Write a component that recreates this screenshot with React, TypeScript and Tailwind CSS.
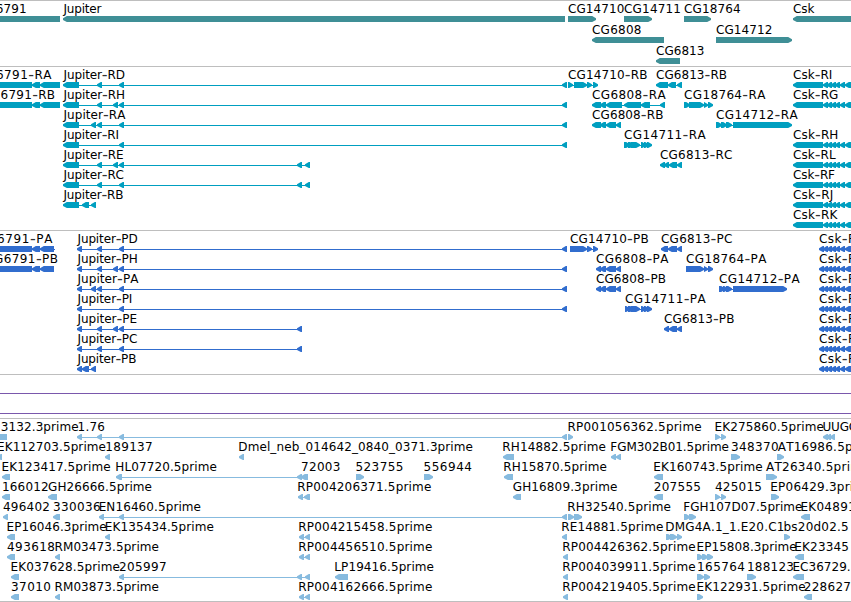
type Dir = "L" | "R" | "B";
type Part = [Dir, number, number];
type Label = [string, number, number];
type Row = { labels: Label[]; parts: Part[]; lines?: [number, number][] };

const L = (...spans: number[]): Part[] => pairs("L", spans);
const R = (...spans: number[]): Part[] => pairs("R", spans);
const B = (...spans: number[]): Part[] => pairs("B", spans);

function pairs(dir: Dir, spans: number[]): Part[] {
  const out: Part[] = [];
  for (let i = 0; i < spans.length; i += 2) out.push([dir, spans[i], spans[i + 1]]);
  return out;
}

const genes: Row[] = [
  {
    labels: [["6791", -4.2, 26], ["Jupiter", 63.5, 100.7], ["CG14710", 568, 623.7], ["CG14711", 624, 680.3], ["CG18764", 684, 740], ["Csk", 793, 813.7]],
    parts: [...B(-5, 60), ...L(63, 565, 793, 900), ...R(568, 596, 624, 652, 684, 711)],
  },
  { labels: [["CG6808", 592, 640.7], ["CG14712", 716, 771.7]], parts: [...L(592, 664), ...R(716, 792)] },
  { labels: [["CG6813", 656, 703.7]], parts: L(656, 680) },
];

const cskExons = L(823, 828, 827, 832, 831, 836, 835, 840, 840, 845, 845, 851);
const cskRna = [...L(793, 823), ...cskExons];
const leftRna = [...B(-5, 32), ...L(32, 40, 40, 60)];

const transcripts: Row[] = [
  {
    labels: [["6791-RA", -4, 50.7], ["Jupiter-RD", 63.5, 124.3], ["CG14710-RB", 568, 646.7], ["CG6813-RB", 656, 726.3], ["Csk-RI", 793, 831.7]],
    parts: [...leftRna, ...L(63, 79, 97, 102, 119, 124, 562, 567), ...R(568, 573, 574, 587, 587, 592, 593, 598), ...L(656, 668, 668, 676, 677, 682), ...cskRna],
    lines: [[63, 567], [568, 598], [656, 682], [823, 851]],
  },
  {
    labels: [["6791-RB", 0.6, 54.3], ["Jupiter-RH", 63.5, 124.3], ["CG6808-RA", 592, 665], ["CG18764-RA", 684, 764.7], ["Csk-RG", 793, 837.7]],
    parts: [...leftRna, ...L(63, 79, 97, 102, 113, 118, 119, 124, 562, 567, 592, 601, 600, 606, 606, 622, 624, 641, 641, 650, 660, 665), ...R(684, 690, 689, 704, 704, 708, 708, 713), ...cskRna],
    lines: [[63, 567], [592, 665], [823, 851]],
  },
  {
    labels: [["Jupiter-RA", 63.5, 124.7], ["CG6808-RB", 592, 662.7], ["CG14712-RA", 716, 797]],
    parts: [...L(63, 79, 91, 96, 97, 102, 119, 124, 562, 567, 592, 601, 600, 606, 606, 616, 616, 621), ...R(716, 722, 721, 727, 726, 732, 733, 792)],
    lines: [[63, 567], [592, 621], [716, 740]],
  },
  {
    labels: [["Jupiter-RI", 63.5, 118.3], ["CG14711-RA", 624, 705], ["Csk-RH", 793, 837.7]],
    parts: [...L(63, 79, 119, 124, 562, 567), ...R(624, 630, 628, 634, 631, 640, 641, 646, 644, 649, 647, 652), ...cskRna],
    lines: [[63, 567], [624, 652]],
  },
  {
    labels: [["Jupiter-RE", 63.5, 123], ["CG6813-RC", 660, 731.7], ["Csk-RL", 793, 835]],
    parts: [...L(63, 79, 97, 102, 113, 118, 119, 124, 297, 302, 305, 310, 660, 665, 664, 669, 669, 677, 677, 682), ...cskRna],
    lines: [[63, 310], [660, 682]],
  },
  {
    labels: [["Jupiter-RC", 63.5, 123.3], ["Csk-RF", 793, 834.3]],
    parts: [...L(63, 79, 97, 102, 119, 124, 297, 302, 305, 310), ...cskRna],
    lines: [[63, 310]],
  },
  {
    labels: [["Jupiter-RB", 63.5, 122.7], ["Csk-RJ", 793, 832.7]],
    parts: [...L(63, 79, 82, 89, 91, 96), ...cskRna],
    lines: [[63, 96]],
  },
  { labels: [["Csk-RK", 793, 836.7]], parts: cskRna },
];

const leftCds = [...B(-5, 32), ...L(32, 40, 40, 54)];
const cskCds = [...L(819, 824), ...cskExons];
const cskP: Label = ["Csk-P", 819, 854.5];

const proteins: Row[] = [
  {
    labels: [["6791-PA", -3, 51.7], ["Jupiter-PD", 77.5, 137], ["CG14710-PB", 570, 648], ["CG6813-PC", 661, 731.7], cskP],
    parts: [...leftCds, ...L(77, 82, 97, 102, 119, 124, 562, 567), ...R(570, 587, 587, 592, 593, 598), ...L(661, 668, 668, 677, 677, 682), ...cskCds],
    lines: [[32, 56], [77, 567], [570, 598], [661, 682]],
  },
  {
    labels: [["G6791-PB", -6, 57.3], ["Jupiter-PH", 77.5, 137], ["CG6808-PA", 596, 667.7], ["CG18764-PA", 686, 765.7], cskP],
    parts: [...leftCds, ...L(77, 82, 97, 102, 113, 118, 119, 124, 562, 567, 596, 601, 600, 606, 606, 616, 616, 621), ...R(686, 704, 704, 708, 708, 713), ...cskCds],
    lines: [[77, 567], [596, 621]],
  },
  {
    labels: [["Jupiter-PA", 77.5, 137.7], ["CG6808-PB", 596, 665.3], ["CG14712-PA", 719, 799], cskP],
    parts: [...L(77, 82, 91, 96, 97, 102, 119, 124, 562, 567, 596, 601, 600, 606, 606, 616, 616, 621), ...R(719, 725, 723, 728, 726, 732, 733, 787), ...cskCds],
    lines: [[77, 567], [596, 621], [719, 740]],
  },
  {
    labels: [["Jupiter-PI", 77.5, 131.7], ["CG14711-PA", 625, 705], cskP],
    parts: [...L(77, 82, 119, 124, 562, 567), ...R(625, 630, 628, 634, 631, 640, 641, 646, 644, 649, 647, 652), ...cskCds],
    lines: [[77, 567], [625, 652]],
  },
  {
    labels: [["Jupiter-PE", 77.5, 136.3], ["CG6813-PB", 664, 733.7], cskP],
    parts: [...L(77, 82, 97, 102, 113, 118, 119, 124, 297, 302, 664, 669, 669, 677, 677, 682), ...cskCds],
    lines: [[77, 302], [664, 682]],
  },
  {
    labels: [["Jupiter-PC", 77.5, 136.7], cskP],
    parts: [...L(77, 82, 97, 102, 119, 124, 297, 302), ...cskCds],
    lines: [[77, 302]],
  },
  {
    labels: [["Jupiter-PB", 77.5, 135.7], cskP],
    parts: [...L(77, 82, 82, 89, 91, 96), ...cskCds],
    lines: [[77, 96]],
  },
];

const ests: Row[] = [
  {
    labels: [["3132.3prime", 0.8, 78], ["1.76", 77.5, 104.3], ["RP001056362.5prime", 567.5, 701], ["EK275860.5prime", 714.5, 823.3], ["UUGC", 822.5, 856.5]],
    parts: [...B(-5, 7), ...L(77, 82, 97, 102, 119, 124, 562, 567), ...R(568, 573, 715, 720, 721, 726), ...L(823, 828, 826, 831, 830, 835)],
    lines: [[77, 567], [715, 726], [823, 835]],
  },
  {
    labels: [["EK112703.5prime", -3, 105.3], ["189137", 105.3, 152], ["Dmel_neb_014642_0840_0371.3prime", 238.3, 472.3], ["RH14882.5prime", 502.3, 605.3], ["FGM302B01.5prime", 610.3, 728.3], ["348370", 731, 778], ["AT16986.5prime", 777.7, 880.3]],
    parts: [...L(-3, 2, 105, 110, 239, 244, 503, 514, 611, 616, 616, 621), ...R(731, 740, 777, 784)],
    lines: [[611, 621]],
  },
  {
    labels: [["EK123417.5prime", 1.5, 110], ["HL07720.5prime", 115.3, 216.3], ["72003", 301, 339.7], ["523755", 355.5, 402.7], ["556944", 423.5, 471.3], ["RH15870.5prime", 503.3, 606.3], ["EK160743.5prime", 653.3, 762], ["AT26340.5prime", 765.9, 869]],
    parts: [...L(2, 10, 116, 122, 297, 302, 301, 308, 504, 513, 654, 663), ...R(356, 364, 424, 433, 766, 777)],
    lines: [[116, 302]],
  },
  {
    labels: [["166012", 2, 48], ["GH26666.5prime", 48, 151.3], ["RP004206371.5prime", 297.3, 430.7], ["GH16809.3prime", 512.7, 616.7], ["207555", 653.7, 700.3], ["425015", 715, 761.3], ["EP06429.3prime", 770.3, 872]],
    parts: [...L(2, 10, 48, 57, 298, 303, 304, 310, 513, 521, 654, 663), ...R(715, 720, 721, 726, 771, 779)],
    lines: [[298, 310], [715, 726]],
  },
  {
    labels: [["496402", 3, 49.3], ["330036", 53, 100], ["EN16460.5prime", 98.7, 200.3], ["RH32540.5prime", 567.3, 670.3], ["FGH107D07.5prime", 683.3, 801.7], ["EK04891", 800.5, 855]],
    parts: [...L(3, 8, 53, 60, 99, 104, 119, 124, 562, 567), ...R(568, 574, 574, 582, 684, 690, 689, 696), ...L(801, 810)],
    lines: [[99, 567], [568, 582], [684, 696]],
  },
  {
    labels: [["EP16046.3prime", 6.5, 106], ["EK135434.5prime", 104.7, 213.3], ["RP004215458.5prime", 298.3, 431.7], ["RE14881.5prime", 561.3, 662.7], ["DMG4A.1_1.E20.C1", 665.3, 783.7], ["bs20d02.5", 783.5, 848]],
    parts: [...L(7, 15, 105, 110, 299, 304, 305, 310, 562, 567), ...R(666, 672, 670, 677, 677, 682, 784, 790)],
    lines: [[299, 310], [666, 682]],
  },
  {
    labels: [["493618", 7, 54.3], ["RM03473.5prime", 54.5, 158.3], ["RP004456510.5prime", 298.3, 431.7], ["RP004426362.5prime", 562.3, 695], ["EP15808.3prime", 696.5, 796], ["EK23345", 794.3, 848.3]],
    parts: [...L(7, 15, 55, 60, 299, 304, 305, 310, 563, 568), ...R(697, 703, 702, 708, 707, 713), ...L(795, 804)],
    lines: [[299, 310], [697, 713]],
  },
  {
    labels: [["EK037628.5prime", 10.5, 119.3], ["205997", 119, 166], ["LP19416.5prime", 334.3, 433.3], ["RP004039911.5prime", 562.3, 695], ["165764", 697, 744.3], ["188123", 747, 793.3], ["EC36729.", 792.5, 850]],
    parts: [...L(11, 19, 119, 124, 297, 302, 305, 310, 335, 348, 563, 568), ...R(697, 704, 704, 710, 747, 756), ...L(793, 804)],
    lines: [[119, 310], [697, 710]],
  },
  {
    labels: [["37010", 11, 50.3], ["RM03873.5prime", 54.5, 158.3], ["RP004162666.5prime", 298.3, 431.7], ["RP004219405.5prime", 562.3, 695], ["EK122931.5prime", 696.5, 805], ["228627", 803.8, 850.3]],
    parts: [...L(11, 19, 55, 60, 299, 304, 305, 310, 563, 568), ...R(697, 703), ...L(804, 812)],
    lines: [[299, 310]],
  },
];

/* Bars are 6px tall; directed ones taper over at most 4px to a blunt tip */
function outline([dir, a, b]: Part, top: number) {
  const bot = top + 6;
  const up = top + 2.2;
  const down = top + 3.9;
  const head = Math.min(3.8, b - a);
  if (dir === "B") return `${a},${top} ${b},${top} ${b},${bot} ${a},${bot}`;
  if (dir === "L") return `${a},${up} ${a + head},${top} ${b},${top} ${b},${bot} ${a + head},${bot} ${a},${down}`;
  return `${b},${up} ${b - head},${top} ${a},${top} ${a},${bot} ${b - head},${bot} ${b},${down}`;
}

function LabelText({ label: [text, x, end], y }: { label: Label; y: number }) {
  const [name, suffix] = text.split("-");
  return (
    <text
      x={x}
      y={y}
      textLength={end + 0.7 - x}
      className="fill-black font-['DejaVu_Sans',sans-serif] text-[12px] [font-kerning:none]"
    >
      {name}
      {suffix && (
        <>
          <tspan dy={1} className="fill-[#333] text-[16px]">-</tspan>
          <tspan dy={-1}>{suffix}</tspan>
        </>
      )}
    </text>
  );
}

type TrackProps = { rows: Row[]; color: string; height: string; pitch: number; top: number };

/* top is the y of the first row's bar; each label's baseline sits 3px above its bar */
function Track({ rows, color, height, pitch, top }: TrackProps) {
  return (
    <section className={`${height} w-full shrink-0 overflow-hidden border-t border-[#bebebe]`}>
      <svg width="851" height="183" className={`block ${color}`} fill="currentColor">
        {rows.map((row, i) => {
          const y = top + i * pitch;
          return (
            <g key={i}>
              {row.lines?.map(([a, b], k) => (
                <rect key={k} x={a + 1} y={y + 3} width={b - a - 2} height={1} />
              ))}
              {row.parts.map((part, k) => (
                <polygon key={k} points={outline(part, y)} />
              ))}
              {row.labels.map((label, k) => (
                <LabelText key={k} label={label} y={y - 3} />
              ))}
            </g>
          );
        })}
      </svg>
    </section>
  );
}

export default function App() {
  return (
    <main className="flex h-[602px] w-[851px] flex-col overflow-hidden bg-white">
      <Track rows={genes} color="text-[#3f8f96]" height="h-[66px]" pitch={21} top={15} />
      <Track rows={transcripts} color="text-[#009fc0]" height="h-[164px]" pitch={20} top={15} />
      <Track rows={proteins} color="text-[#316dce]" height="h-[144px]" pitch={20} top={15} />
      <section className="flex h-11 shrink-0 flex-col gap-[19px] border-t border-[#bebebe] pt-[18px]">
        <div className="h-px shrink-0 bg-[#7a58ac]" />
        <div className="h-px shrink-0 bg-[#7a58ac]" />
      </section>
      <Track rows={ests} color="text-[#87bbdf]" height="h-[183px]" pitch={20} top={15} />
      <div className="h-px shrink-0 bg-[#bebebe]" />
    </main>
  );
}
